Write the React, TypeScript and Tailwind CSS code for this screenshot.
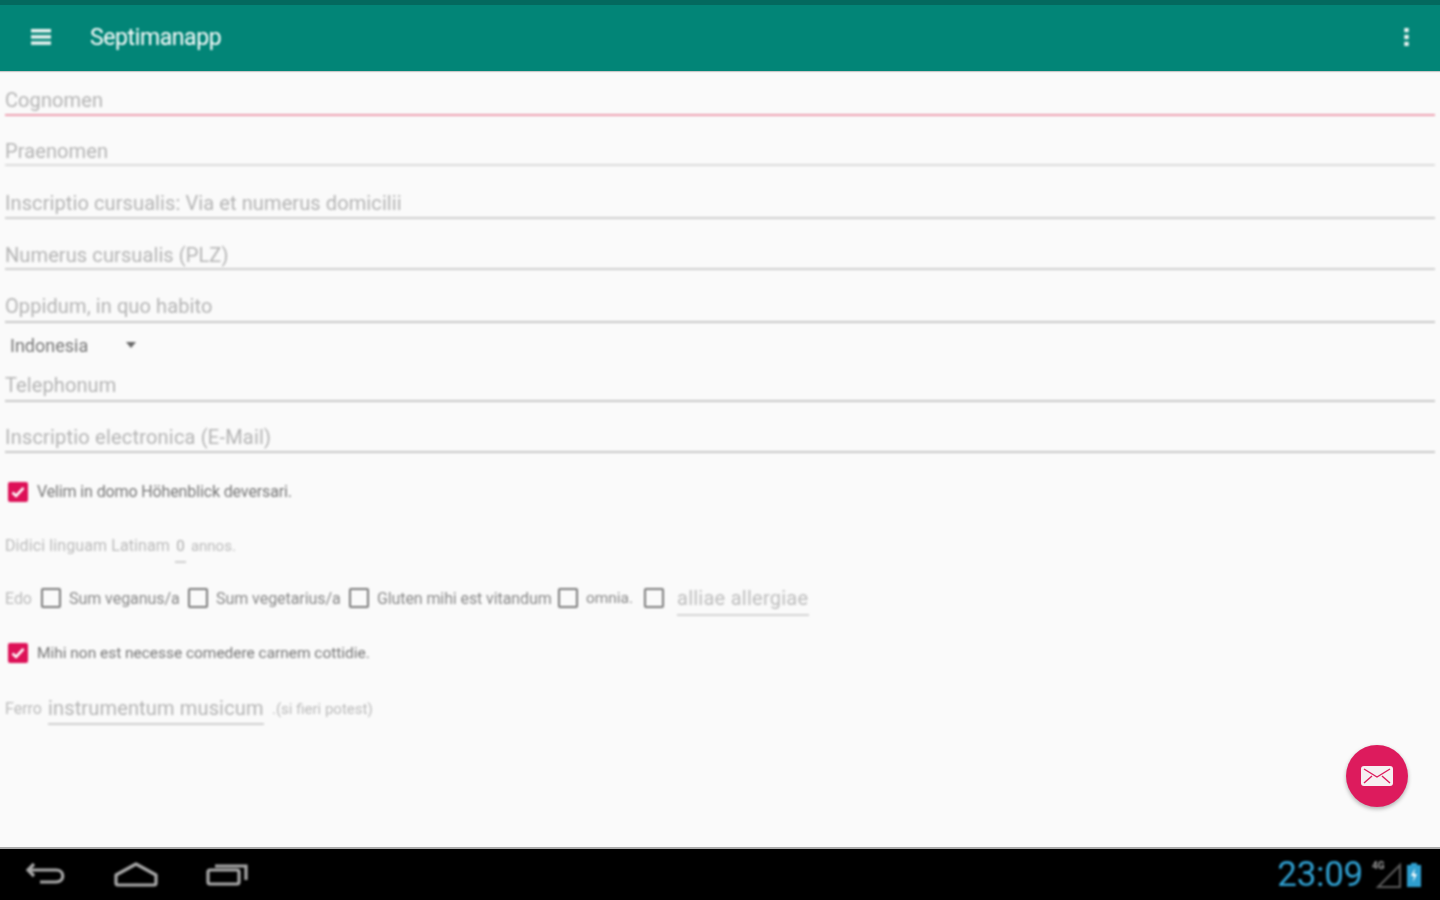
import React from 'react';

const fields = [
  { id: 'cognomen', label: 'Cognomen', height: 'h-[45px]', line: 'border-[#ee9fb0]', gap: 'mb-[1px]' },
  { id: 'praenomen', label: 'Praenomen', height: 'h-[50px]', line: 'border-[#dcdcdc]', gap: 'mb-0' },
  { id: 'via', label: 'Inscriptio cursualis: Via et numerus domicilii', height: 'h-[53px]', line: 'border-[#cfcfcf]', gap: 'mb-[1px]' },
  { id: 'plz', label: 'Numerus cursualis (PLZ)', height: 'h-[51px]', line: 'border-[#cfcfcf]', gap: 'mb-0' },
  { id: 'oppidum', label: 'Oppidum, in quo habito', height: 'h-[53px]', line: 'border-[#c8c8c8]', gap: 'mb-[2px]' },
];

function Field({ label, height, line, gap }: { label: string; height: string; line: string; gap: string }) {
  return (
    <div className={`${height} flex items-end border-b-2 ${line}`}>
      <span className={`${gap} text-[20px] leading-[26px] tracking-[0.1px] text-[#b4b4b4]`}>{label}</span>
    </div>
  );
}

function Checked() {
  return (
    <span className="flex h-[20px] w-[20px] shrink-0 items-center justify-center rounded-[2px] bg-[#dd1057]">
      <svg viewBox="0 0 20 20" className="h-[20px] w-[20px]" fill="none" stroke="#fff" strokeWidth="2.6">
        <path d="M4.5 10.5l3.6 3.4 7.4-8" />
      </svg>
    </span>
  );
}

function Unchecked() {
  return <span className="h-[20px] w-[20px] shrink-0 rounded-[2px] border-2 border-[#7b7b7b]" />;
}

export default function App() {
  return (
    <div className="relative flex h-[900px] w-[1440px] flex-col overflow-hidden bg-[#fafafa] font-['Roboto',sans-serif]">
      <header className="h-[71px] border-t-[5px] border-[#03695e] bg-[#028577] text-white shadow-[0_1px_1px_rgba(0,0,0,0.2)]">
        <div className="flex h-full items-center pb-[3px] pl-[31px] pr-[31px] blur-[0.8px]">
          <svg viewBox="0 0 20 16" className="h-[16px] w-[20px]" fill="#eef5f3">
            <rect y="0" width="20" height="3.4" />
            <rect y="6.2" width="20" height="3.4" />
            <rect y="12.4" width="20" height="3.4" />
          </svg>
          <span className="ml-[39px] pt-[4px] text-[23px] tracking-[-0.4px]">Septimanapp</span>
          <svg viewBox="0 0 5 18" className="ml-auto h-[18px] w-[5px]" fill="#eef5f3">
            <rect x="0.3" y="0" width="4.4" height="4.2" />
            <rect x="0.3" y="6.9" width="4.4" height="4.2" />
            <rect x="0.3" y="13.8" width="4.4" height="4.2" />
          </svg>
        </div>
      </header>

      <main className="flex-1 px-[5px] blur-[0.8px]">
        {fields.map(f => (
          <Field key={f.id} label={f.label} height={f.height} line={f.line} gap={f.gap} />
        ))}

        <div className="flex h-[38px] items-start pl-[5px] pt-[9px]">
          <span className="w-[116px] text-[18px] leading-[27px] text-[#777]">Indonesia</span>
          <span className="mt-[10px] h-0 w-0 border-x-[5px] border-t-[6px] border-x-transparent border-t-[#666]" />
        </div>

        <div className="flex h-[41px] items-end border-b-2 border-[#c8c8c8]">
          <span className="mb-[2px] text-[20px] leading-[26px] tracking-[0.1px] text-[#b4b4b4]">Telephonum</span>
        </div>
        <div className="flex h-[51px] items-end border-b-2 border-[#c8c8c8]">
          <span className="mb-[1px] text-[20px] leading-[26px] tracking-[0.2px] text-[#b4b4b4]">Inscriptio electronica (E-Mail)</span>
        </div>

        <div className="mt-[29px] flex items-center gap-[9px] pl-[3px]">
          <Checked />
          <span className="text-[16px] leading-[20px] tracking-[-0.13px] text-[#777]">Velim in domo Höhenblick deversari.</span>
        </div>

        <div className="mt-[27px] flex h-[34px] items-center text-[#bbb]">
          <span className="text-[16px] tracking-[0.1px]">Didici linguam Latinam</span>
          <span className="relative ml-[5px] flex h-[34px] w-[11px] items-center justify-center text-[15px] text-[#aaa]">
            0
            <span className="absolute bottom-0 left-0 h-[2px] w-[11px] bg-[#cfcfcf]" />
          </span>
          <span className="ml-[5px] text-[15px]">annos.</span>
        </div>

        <div className="mt-[17px] flex h-[36px] items-center text-[16px] tracking-[-0.05px] text-[#888]">
          <span className="w-[36px] pt-[2px] text-[#bbb]">Edo</span>
          <Unchecked />
          <span className="ml-[8px] w-[119px] pt-[2px]">Sum veganus/a</span>
          <Unchecked />
          <span className="ml-[8px] w-[133px] pt-[2px]">Sum vegetarius/a</span>
          <Unchecked />
          <span className="ml-[8px] w-[181px] pt-[2px] tracking-[-0.1px]">Gluten mihi est vitandum</span>
          <Unchecked />
          <span className="ml-[8px] w-[58px] pt-[2px] text-[15.5px]">omnia.</span>
          <Unchecked />
          <span className="ml-[13px] flex h-[36px] w-[132px] items-center border-b-2 border-[#d4d4d4] pt-[2px] text-[20px] tracking-[0.25px] text-[#bdbdbd]">
            alliae allergiae
          </span>
        </div>

        <div className="mt-[27px] flex items-center gap-[9px] pl-[3px]">
          <Checked />
          <span className="text-[15.5px] leading-[20px] tracking-[-0.03px] text-[#777]">Mihi non est necesse comedere carnem cottidie.</span>
        </div>

        <div className="mt-[26px] flex h-[36px] items-center text-[#bbb]">
          <span className="w-[43px] pt-[4px] text-[16px]">Ferro</span>
          <span className="flex h-[36px] w-[216px] items-center border-b-2 border-[#d0d0d0] pt-[4px] text-[20px] tracking-[0.15px] text-[#b4b4b4]">
            instrumentum musicum
          </span>
          <span className="ml-[8px] pt-[4px] text-[15px]">.(si fieri potest)</span>
        </div>
      </main>

      <button className="absolute left-[1346px] top-[745px] flex h-[62px] w-[62px] items-center justify-center rounded-full bg-[#dd1b5d] shadow-[0_2px_4px_rgba(0,0,0,0.3)] blur-[0.6px]">
        <svg viewBox="0 0 32 20" className="h-[20px] w-[32px]">
          <rect width="32" height="20" rx="3" fill="#f6f0f2" />
          <path d="M3 3l13 8 13-8M3 17l8-7M29 17l-8-7" fill="none" stroke="#dd1b5d" strokeWidth="1.4" />
        </svg>
      </button>

      <footer className="h-[53px] border-t-2 border-[#aaa] bg-black">
        <div className="flex h-full items-center pl-[26px] pr-[18px] blur-[0.8px]">
          <svg viewBox="0 0 40 26" className="h-[26px] w-[40px]" fill="none" stroke="#a9a9a9" strokeWidth="3.2">
            <path d="M8 2 2 8l6 6M2 8h28c9 0 9 12 0 12H14" />
          </svg>
          <svg viewBox="0 0 44 26" className="ml-[48px] h-[26px] w-[44px]" fill="none" stroke="#a9a9a9" strokeWidth="3.2">
            <path d="M2 13 22 2l20 11v8a2 2 0 0 1-2 2H4a2 2 0 0 1-2-2z" strokeLinejoin="round" />
          </svg>
          <svg viewBox="0 0 42 26" className="ml-[48px] h-[26px] w-[42px]" fill="none" stroke="#a9a9a9" strokeWidth="3.2">
            <path d="M9 4h31v14" />
            <rect x="2" y="8" width="31" height="14" rx="2" />
          </svg>
          <span className="ml-auto text-[35px] leading-none tracking-[-0.3px] text-[#2f9fd0]">23:09</span>
          <div className="relative ml-[9px] h-[28px] w-[30px]">
            <span className="absolute left-0 top-0 text-[10px] font-bold leading-none text-[#9a9a9a]">4G</span>
            <svg viewBox="0 0 30 28" className="h-[28px] w-[30px]" fill="none" stroke="#5c5c5c" strokeWidth="2">
              <path d="M28 4v22H6z" />
            </svg>
          </div>
          <svg viewBox="0 0 16 24" className="ml-[4px] h-[24px] w-[16px]">
            <path d="M5 0h6v2h4v22H1V2h4z" fill="#2f9fd0" />
            <path d="M9 5 5 13h3l-1 6 4-8H8z" fill="#fff" />
          </svg>
        </div>
      </footer>
    </div>
  );
}
